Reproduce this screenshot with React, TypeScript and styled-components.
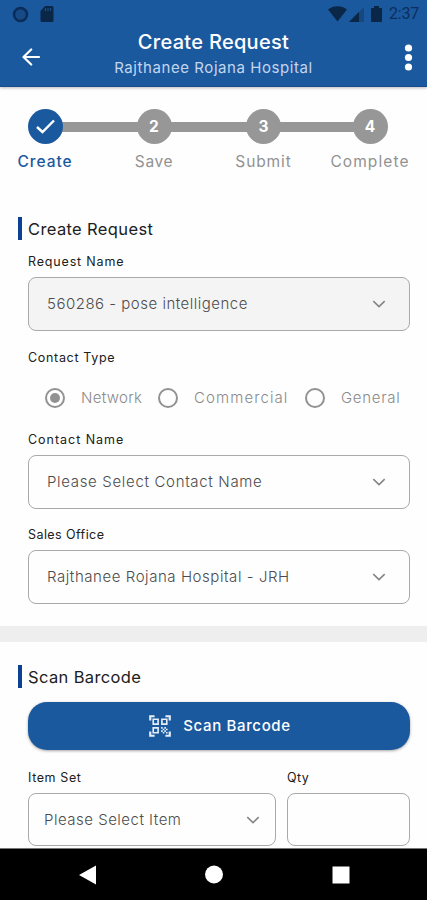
import React from "react";
import styled, { createGlobalStyle } from "styled-components";
import { MdQrCodeScanner } from "react-icons/md";

const GlobalStyle = createGlobalStyle`
  * { box-sizing: border-box; }
  body { margin: 0; background: #fefefe; font-family: Inter, "Open Sans", sans-serif; }
  button { font-family: inherit; }
`;

const Screen = styled.div`
  width: 427px;
  height: 900px;
  display: flex;
  flex-direction: column;
  overflow: hidden;
  background: #fefefe;
`;

const Text = styled.span<{ $size: number; $weight?: number; $spacing?: number; $color?: string }>`
  font-size: ${(p) => p.$size}px;
  font-weight: ${(p) => p.$weight ?? 400};
  letter-spacing: ${(p) => p.$spacing ?? 0}px;
  color: ${(p) => p.$color ?? "#202020"};
  line-height: 20px;
  white-space: nowrap;
`;

const Header = styled.header`
  flex: none;
  height: 87px;
  background: #1b599f;
  border-bottom: 1px solid #164c8c;
  box-shadow: 0 1px 3px rgba(0, 0, 0, 0.28);
`;

const StatusBar = styled.div`
  height: 28px;
  display: flex;
  align-items: center;
  justify-content: space-between;
  padding: 0 8px 0 12px;
`;

const StatusGroup = styled.div<{ $gap: number }>`
  display: flex;
  align-items: center;
  gap: ${(p) => p.$gap}px;
`;

const Clock = styled.span`
  font: 400 16px/20px Roboto, sans-serif;
  letter-spacing: -0.2px;
  color: #0b2e5c;
`;

const TitleBar = styled.div`
  height: 58px;
  display: grid;
  grid-template-columns: 62px 1fr 62px;
  align-items: center;
`;

const BackButton = styled.button`
  display: flex;
  padding: 0 0 0 21px;
  border: 0;
  background: none;
`;

const MoreButton = styled.button`
  display: flex;
  justify-content: flex-end;
  padding: 0 14px 0 0;
  border: 0;
  background: none;
`;

const Titles = styled.div`
  display: flex;
  flex-direction: column;
  align-items: center;
  gap: 6px;
  padding-bottom: 5px;
`;

const Stepper = styled.div`
  flex: none;
  display: grid;
  grid-template-columns: 90px 128px 91px 122px;
  padding-top: 22px;
  height: 130px;
`;

const Step = styled.div`
  display: flex;
  flex-direction: column;
  align-items: center;
  gap: 8px;
`;

const StepTrack = styled.div`
  width: 100%;
  display: flex;
  align-items: center;
`;

const Rail = styled.div<{ $hidden?: boolean }>`
  flex: 1;
  height: 10px;
  background: ${(p) => (p.$hidden ? "transparent" : "#979797")};
`;

const StepDot = styled.div<{ $active?: boolean }>`
  z-index: 1;
  width: 35px;
  height: 35px;
  margin: 0 -2px;
  border-radius: 50%;
  display: flex;
  align-items: center;
  justify-content: center;
  color: #fff;
  font-size: 15.5px;
  font-weight: 700;
  background: ${(p) => (p.$active ? "#1b599f" : "#979797")};
`;

const SectionTitle = styled.h2`
  margin: 0;
  height: 23px;
  margin-left: 18px;
  padding-left: 6px;
  border-left: 4px solid #0c4093;
  display: flex;
  align-items: center;
`;

const Section = styled.section`
  flex: none;
`;

const Form = styled.div`
  padding: 0 17px 0 28px;
`;

const Field = styled.div<{ $top: number }>`
  display: flex;
  flex-direction: column;
  gap: 5px;
  padding-top: ${(p) => p.$top}px;
`;

const SelectBox = styled.div<{ $filled?: boolean; $height?: number; $inset?: number; $end?: number }>`
  height: ${(p) => p.$height ?? 54}px;
  display: flex;
  align-items: center;
  justify-content: space-between;
  padding: 0 ${(p) => p.$end ?? 23}px 0 ${(p) => p.$inset ?? 18}px;
  border: 1px solid #a9a9a9;
  border-radius: 8px;
  background: ${(p) => (p.$filled ? "#f4f4f4" : "#fefefe")};
`;

const RadioRow = styled.div`
  display: grid;
  grid-template-columns: 113px 147px 1fr;
  height: 28px;
  margin-top: 16.5px;
  padding-left: 17px;
`;

const Radio = styled.label`
  display: flex;
  align-items: center;
  gap: 16px;
`;

const RadioRing = styled.span<{ $checked?: boolean }>`
  width: 20px;
  height: 20px;
  display: grid;
  place-items: center;
  border: 2px solid #929292;
  border-radius: 50%;
  &::after {
    content: "";
    width: 10px;
    height: 10px;
    border-radius: 50%;
    background: ${(p) => (p.$checked ? "#929292" : "transparent")};
  }
`;

const Divider = styled.div`
  flex: none;
  height: 16px;
  margin: 22px 0 23px;
  background: #eeeeee;
`;

const ScanButton = styled.button`
  width: 382px;
  height: 48px;
  margin-top: 14px;
  padding: 0;
  display: flex;
  align-items: center;
  justify-content: center;
  gap: 10px;
  border: 0;
  border-radius: 19px;
  background: #1b599f;
  color: #e6eef8;
  box-shadow: 0 1px 3px rgba(0, 0, 0, 0.35);
`;

const ItemRow = styled.div`
  display: grid;
  grid-template-columns: 248px 123px;
  gap: 11px;
`;

const NavBar = styled.nav`
  flex: none;
  height: 52px;
  margin-top: auto;
  border-top: 1px solid #777;
  background: #000;
  display: flex;
  align-items: center;
  justify-content: space-between;
  padding: 0 77px 0 78px;
`;

const CircleIcon = () => (
  <svg width="17" height="17" viewBox="0 0 17 17">
    <circle cx="8.5" cy="8.5" r="6.5" fill="#174a86" stroke="#0b2c57" strokeWidth="2.5" />
  </svg>
);

const CardIcon = () => (
  <svg width="14" height="16" viewBox="0 0 14 16">
    <path d="M5 0h7a1.5 1.5 0 0 1 1.5 1.5v13A1.5 1.5 0 0 1 12 16H2a1.5 1.5 0 0 1-1.5-1.5V5z" fill="#0b2747" />
    <path d="M5.5 2v3M8 2v3M10.5 2v3" stroke="#1b4f85" strokeWidth="1.2" />
  </svg>
);

const WifiIcon = () => (
  <svg width="19" height="16" viewBox="0 0 19 16">
    <path d="M0 3.5C5-1 14-1 19 3.5L9.5 15.5z" fill="#0b2747" />
  </svg>
);

const SignalIcon = () => (
  <svg width="15" height="15" viewBox="0 0 15 15">
    <path d="M15 0v15H0z" fill="#17477f" />
    <path d="M10 5v10H0z" fill="#0b2747" />
  </svg>
);

const BatteryIcon = () => (
  <svg width="11" height="16" viewBox="0 0 11 16">
    <path d="M3 0h5v2h2a1 1 0 0 1 1 1v12a1 1 0 0 1-1 1H1a1 1 0 0 1-1-1V3a1 1 0 0 1 1-1h2z" fill="#0b2747" />
  </svg>
);

const BackIcon = () => (
  <svg width="20" height="18" viewBox="0 0 20 18" fill="none" stroke="#fff" strokeWidth="2.2" strokeLinecap="round" strokeLinejoin="round">
    <path d="M18 9H2.5M10.2 1.5L2.5 9l7.7 7.5" />
  </svg>
);

const MoreIcon = () => (
  <svg width="9" height="27" viewBox="0 0 9 27" fill="#fff">
    <circle cx="4.5" cy="4" r="3.6" />
    <circle cx="4.5" cy="13.5" r="3.6" />
    <circle cx="4.5" cy="23" r="3.6" />
  </svg>
);

const CheckIcon = () => (
  <svg width="19" height="15" viewBox="0 0 19 15" fill="none" stroke="#fff" strokeWidth="2.4">
    <path d="M1 8l5.5 5L18 1.5" />
  </svg>
);

const Chevron = () => (
  <svg width="14" height="8" viewBox="0 0 14 8" fill="none" stroke="#858585" strokeWidth="1.6">
    <path d="M1.3 1.2L7 6.6l5.7-5.400" />
  </svg>
);

const steps = [
  { label: "Create", spacing: 0.95 },
  { label: "Save", spacing: 0.6 },
  { label: "Submit", spacing: 0.9 },
  { label: "Complete", spacing: 1.1 },
];

interface SelectProps {
  label: string;
  labelSpacing: number;
  value: string;
  spacing: number;
  top: number;
  filled?: boolean;
  height?: number;
  inset?: number;
  end?: number;
}

const Select = ({ label, labelSpacing, value, spacing, top, filled, height, inset, end }: SelectProps) => (
  <Field $top={top}>
    <Text $size={12.5} $spacing={labelSpacing}>{label}</Text>
    <SelectBox $filled={filled} $height={height} $inset={inset} $end={end}>
      <Text $size={15} $weight={300} $spacing={spacing} $color="#4c4c4c">{value}</Text>
      <Chevron />
    </SelectBox>
  </Field>
);

export default function App() {
  return (
    <Screen>
      <GlobalStyle />
      <Header>
        <StatusBar>
          <StatusGroup $gap={11}>
            <CircleIcon />
            <CardIcon />
          </StatusGroup>
          <StatusGroup $gap={7}>
            <StatusGroup $gap={2}>
              <WifiIcon />
              <SignalIcon />
            </StatusGroup>
            <BatteryIcon />
            <Clock>2:37</Clock>
          </StatusGroup>
        </StatusBar>
        <TitleBar>
          <BackButton aria-label="Back"><BackIcon /></BackButton>
          <Titles>
            <Text $size={20} $weight={500} $spacing={0.3} $color="#fff">Create Request</Text>
            <Text $size={15} $spacing={0.57} $color="#c3d6ee">Rajthanee Rojana Hospital</Text>
          </Titles>
          <MoreButton aria-label="More options"><MoreIcon /></MoreButton>
        </TitleBar>
      </Header>

      <Stepper>
        {steps.map((step, i) => (
          <Step key={step.label}>
            <StepTrack>
              <Rail $hidden={i === 0} />
              <StepDot $active={i === 0}>{i === 0 ? <CheckIcon /> : i + 1}</StepDot>
              <Rail $hidden={i === steps.length - 1} />
            </StepTrack>
            <Text $size={15.5} $weight={i === 0 ? 500 : 400} $spacing={step.spacing} $color={i === 0 ? "#1b599f" : "#929292"}>
              {step.label}
            </Text>
          </Step>
        ))}
      </Stepper>

      <Section>
        <SectionTitle><Text $size={16.5} $spacing={0.37}>Create Request</Text></SectionTitle>
        <Form>
          <Select label="Request Name" labelSpacing={0.83} value="560286 - pose intelligence" spacing={0.5} top={12} filled />
          <Field $top={16.5}>
            <Text $size={12.5} $spacing={0.68}>Contact Type</Text>
          </Field>
          <RadioRow>
            <Radio>
              <RadioRing $checked />
              <Text $size={15} $weight={300} $spacing={0.3} $color="#8a8a8a">Network</Text>
            </Radio>
            <Radio>
              <RadioRing />
              <Text $size={15} $weight={300} $spacing={1.1} $color="#8a8a8a">Commercial</Text>
            </Radio>
            <Radio>
              <RadioRing />
              <Text $size={15} $weight={300} $spacing={0.7} $color="#8a8a8a">General</Text>
            </Radio>
          </RadioRow>
          <Select label="Contact Name" labelSpacing={0.97} value="Please Select Contact Name" spacing={0.67} top={17.5} />
          <Select label="Sales Office" labelSpacing={0.43} value="Rajthanee Rojana Hospital - JRH" spacing={0.56} top={16.5} />
        </Form>
      </Section>

      <Divider />

      <Section>
        <SectionTitle><Text $size={16.5} $spacing={0.37}>Scan Barcode</Text></SectionTitle>
        <Form>
          <ScanButton>
            <MdQrCodeScanner size={26} />
            <Text $size={15} $weight={500} $spacing={0.65} $color="#fff">Scan Barcode</Text>
          </ScanButton>
          <ItemRow>
            <Select label="Item Set" labelSpacing={0.6} value="Please Select Item" spacing={0.5} top={18} height={53} inset={15} end={15} />
            <Field $top={18}>
              <Text $size={12.5} $spacing={0.4}>Qty</Text>
              <SelectBox $height={53} />
            </Field>
          </ItemRow>
        </Form>
      </Section>

      <NavBar>
        <svg width="18" height="20" viewBox="0 0 18 20"><path d="M1 10L18 .5v19z" fill="#fff" /></svg>
        <svg width="19" height="19" viewBox="0 0 19 19"><circle cx="9" cy="9.5" r="9" fill="#fff" /></svg>
        <svg width="18" height="18" viewBox="0 0 18 18"><path d="M.5.5h17v17H.5z" fill="#fff" /></svg>
      </NavBar>
    </Screen>
  );
}
